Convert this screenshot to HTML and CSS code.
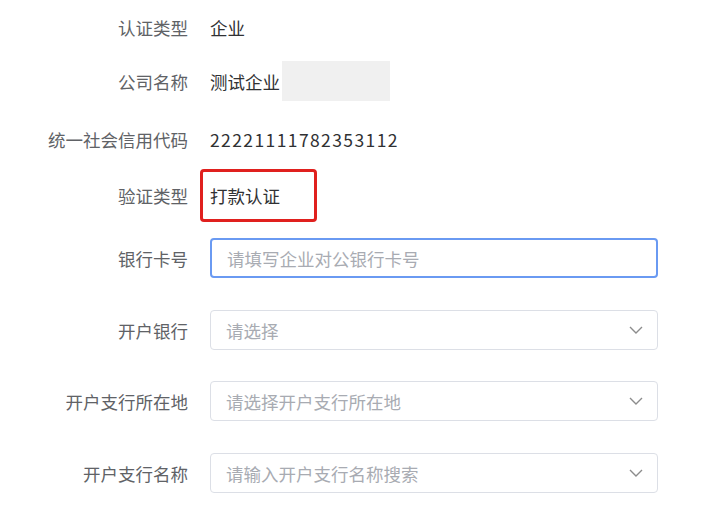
FILE: index.html
```html
<!DOCTYPE html>
<html lang="zh-CN">
<head>
<meta charset="utf-8">
<link rel="stylesheet" href="styles.css">
</head>
<body>
<form class="form">
  <div class="row r1">
    <label class="label">认证类型</label>
    <div class="value">企业</div>
  </div>
  <div class="row r2">
    <label class="label">公司名称</label>
    <div class="value">测试企业<span class="mask"></span></div>
  </div>
  <div class="row r3">
    <label class="label">统一社会信用代码</label>
    <div class="value"><span class="digits">22221111782353112</span></div>
  </div>
  <div class="row r4">
    <label class="label">验证类型</label>
    <div class="value highlight">打款认证<span class="redbox"></span></div>
  </div>
  <div class="row r5">
    <label class="label">银行卡号</label>
    <div class="input focused"><span class="ph">请填写企业对公银行卡号</span></div>
  </div>
  <div class="row r6">
    <label class="label">开户银行</label>
    <div class="input"><span class="ph">请选择</span>
      <svg class="chev" width="14" height="8" viewBox="0 0 14 8"><path d="M1 1 L7 7 L13 1" fill="none" stroke="#8c8c8c" stroke-width="1.4"/></svg>
    </div>
  </div>
  <div class="row r7">
    <label class="label">开户支行所在地</label>
    <div class="input"><span class="ph">请选择开户支行所在地</span>
      <svg class="chev" width="14" height="8" viewBox="0 0 14 8"><path d="M1 1 L7 7 L13 1" fill="none" stroke="#8c8c8c" stroke-width="1.4"/></svg>
    </div>
  </div>
  <div class="row r8">
    <label class="label">开户支行名称</label>
    <div class="input"><span class="ph">请输入开户支行名称搜索</span>
      <svg class="chev" width="14" height="8" viewBox="0 0 14 8"><path d="M1 1 L7 7 L13 1" fill="none" stroke="#8c8c8c" stroke-width="1.4"/></svg>
    </div>
  </div>
</form>
</body>
</html>
```
FILE: styles.css
```css
html, body {
  margin: 0;
  padding: 0;
  background: #fff;
}
body {
  font-family: "Noto Sans CJK SC", "Noto Sans", sans-serif;
  font-size: 17.5px;
}
.form {
  display: flex;
  flex-direction: column;
  padding-top: 7px;
}
.row {
  display: flex;
  align-items: center;
  height: 40px;
}
.r1 { margin-bottom: 14px; }
.r2 { margin-bottom: 18px; }
.r3 { margin-bottom: 16px; }
.r4 { margin-bottom: 23px; }
.r5 { margin-bottom: 32px; }
.r6 { margin-bottom: 31px; }
.r7 { margin-bottom: 32px; }
.label {
  width: 210px;
  box-sizing: border-box;
  padding-right: 22px;
  text-align: right;
  color: #606266;
  flex: none;
}
.value {
  color: #303133;
  display: flex;
  align-items: center;
  height: 40px;
  position: relative;
}
.mask {
  display: inline-block;
  width: 108px;
  height: 40px;
  margin-left: 2px;
  background: #f0f0f0;
}
.digits {
  letter-spacing: 1.4px;
}
.redbox {
  position: absolute;
  left: -10px;
  top: -6px;
  width: 117px;
  height: 53px;
  box-sizing: border-box;
  border: 3px solid #e0201e;
  border-radius: 4px;
}
.input {
  width: 448px;
  height: 40px;
  box-sizing: border-box;
  border: 1px solid #dcdfe6;
  border-radius: 4px;
  display: flex;
  align-items: center;
  justify-content: space-between;
  padding: 0 14px 0 15px;
}
.input.focused {
  border: 2px solid #6a9af2;
}
.ph {
  color: #a8abb2;
}
.chev {
  display: block;
}
```
